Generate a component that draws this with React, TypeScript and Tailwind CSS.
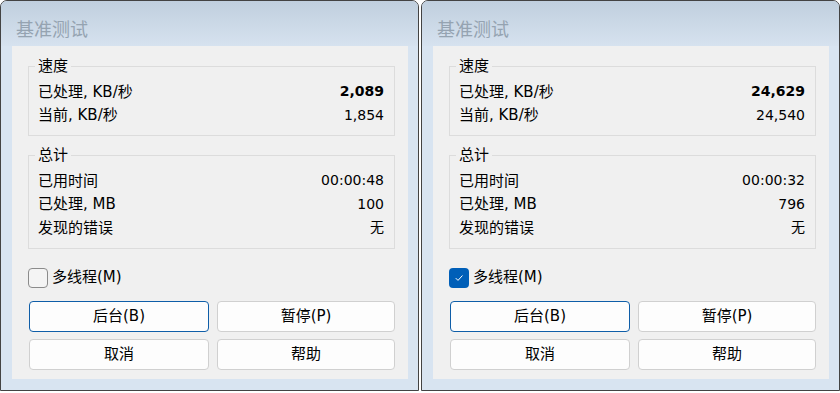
import React from "react"

const FONT = { fontFamily: '"DejaVu Sans", "Noto Sans CJK SC", sans-serif' }

type Row = { label: string; value: string; bold?: boolean }

function Group({ title, rows }: { title: string; rows: Row[] }) {
  return (
    <fieldset className="border border-[#dcdcdc] w-[367px] pt-[4px] pb-[8px] pl-[9px] pr-[10px]">
      <legend className="-ml-[3px] px-[3px] text-[15px] leading-[20px] text-black">{title}</legend>
      {rows.map((r) => (
        <div key={r.label} className="flex h-[23.5px] items-center justify-between">
          <span className="text-[15px] text-black">{r.label}</span>
          <span className={`text-[14px] text-black ${r.bold ? "font-bold" : ""}`}>{r.value}</span>
        </div>
      ))}
    </fieldset>
  )
}

function Btn({ label, focused }: { label: string; focused?: boolean }) {
  return (
    <button
      type="button"
      className={`h-[31px] rounded-[4px] border bg-[#fdfdfd] text-[15px] text-black ${focused ? "border-[#0f5ea8]" : "border-[#d0d0d0]"}`}
    >
      {label}
    </button>
  )
}

function BenchWindow({ speed, current, elapsed, mb, checked }: { speed: string; current: string; elapsed: string; mb: string; checked: boolean }) {
  return (
    <div className="flex h-[391px] w-[419px] flex-col rounded-t-[7px] border border-[#434343] bg-[#d8e4f1]">
      <div className="h-[45px] rounded-t-[6px] bg-linear-to-b from-[#c0cfde] to-[#d6e2ef] pl-[15px] pt-[17px]">
        <span className="text-[18px] leading-[24px] text-[#95a3b1]">基准测试</span>
      </div>
      <div className="ml-[11px] h-[333px] w-[396px] bg-[#f0f0f0] pl-[16px] pr-[13px] pt-[10px]">
        <Group
          title="速度"
          rows={[
            { label: "已处理, KB/秒", value: speed, bold: true },
            { label: "当前, KB/秒", value: current },
          ]}
        />
        <div className="h-[9px]" />
        <Group
          title="总计"
          rows={[
            { label: "已用时间", value: elapsed },
            { label: "已处理, MB", value: mb },
            { label: "发现的错误", value: "无" },
          ]}
        />
        <div className="mt-[19px] flex h-[20px] items-center gap-[4px]">
          {checked ? (
            <span className="flex h-[20px] w-[20px] items-center justify-center rounded-[4px] bg-[#005fb8]">
              <svg width="12" height="12" viewBox="0 0 12 12" fill="none">
                <path d="M3 6.4 L5 8.4 L9.2 3.8" stroke="white" strokeWidth="1" strokeLinecap="round" strokeLinejoin="round" />
              </svg>
            </span>
          ) : (
            <span className="h-[20px] w-[20px] rounded-[4px] border border-[#8b8b8b] bg-[#f4f4f4]" />
          )}
          <span className="text-[15px] text-black">多线程(M)</span>
        </div>
        <div className="ml-[1px] mt-[13px] grid grid-cols-[180px_178px] gap-x-[8px] gap-y-[7px]">
          <Btn label="后台(B)" focused />
          <Btn label="暂停(P)" />
          <Btn label="取消" />
          <Btn label="帮助" />
        </div>
      </div>
    </div>
  )
}

export default function App() {
  return (
    <div className="flex h-[393px] w-[840px] gap-[2px] bg-white" style={FONT}>
      <BenchWindow speed="2,089" current="1,854" elapsed="00:00:48" mb="100" checked={false} />
      <BenchWindow speed="24,629" current="24,540" elapsed="00:00:32" mb="796" checked />
    </div>
  )
}
